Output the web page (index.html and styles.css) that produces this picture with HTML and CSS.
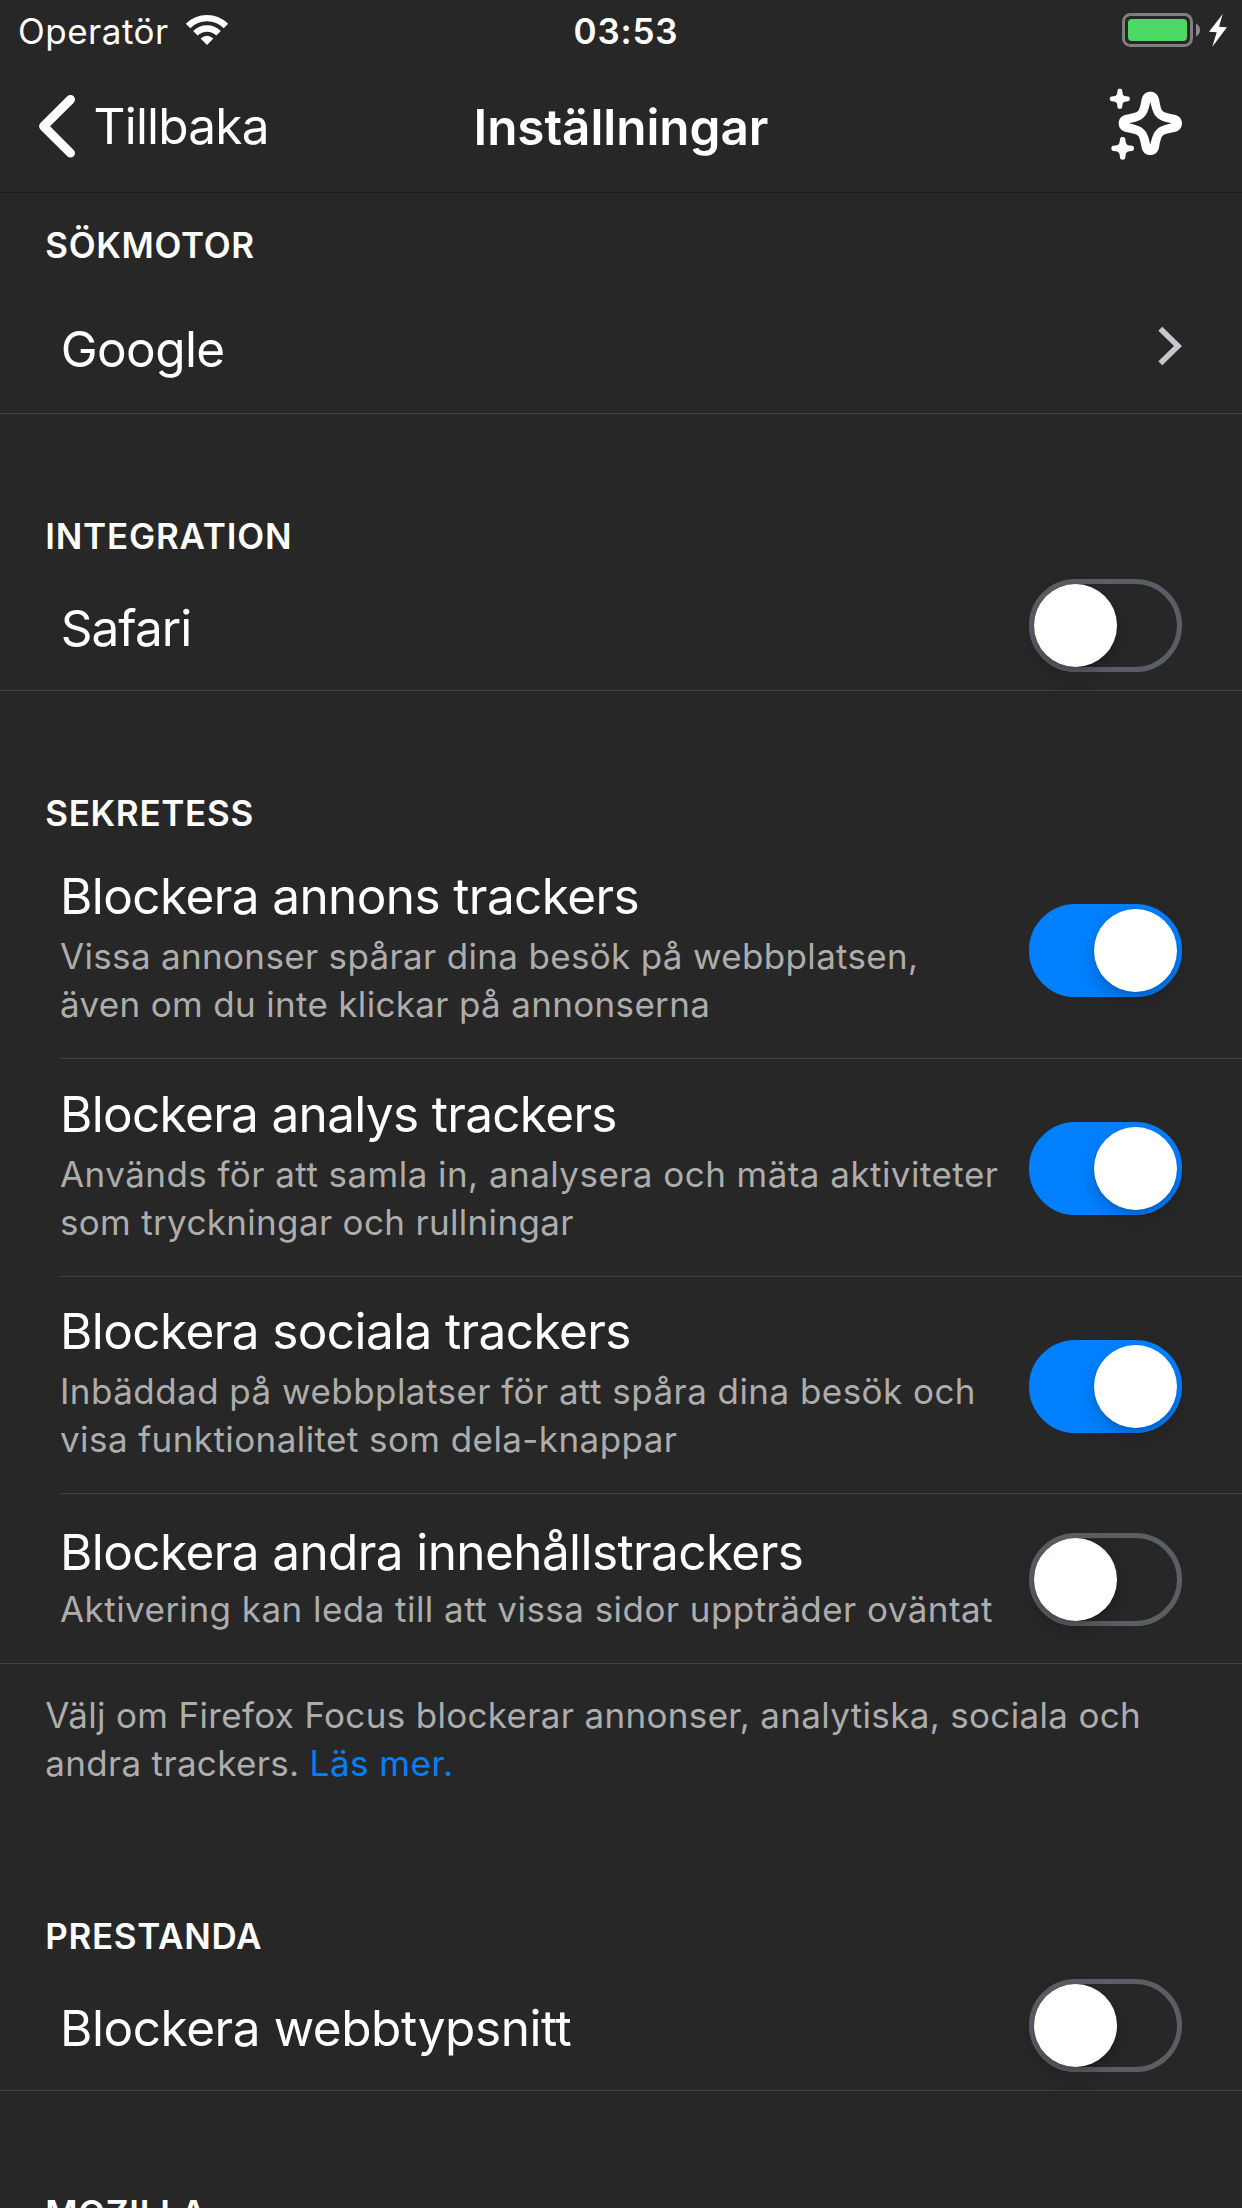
FILE: index.html
```
<!DOCTYPE html>
<html lang="sv">
<head>
<meta charset="utf-8">
<title>Inställningar</title>
<link rel="stylesheet" href="styles.css">
</head>
<body>
<div class="screen">
  <header class="status">
    <div class="status-left">
      <span class="carrier">Operatör</span>
      <svg class="wifi" width="44" height="32" viewBox="0 0 44 32" fill="none" stroke="#fff">
        <path d="M3.05 11.95A26.8 26.8 0 0 1 40.95 11.95" stroke-width="6.3"/>
        <path d="M10.4 19.3A16.4 16.4 0 0 1 33.6 19.3" stroke-width="6.3"/>
        <path d="M22 31L15.6 24.4Q22 19 28.4 24.4Z" fill="#fff" stroke="none"/>
      </svg>
    </div>
    <span class="clock">03:53</span>
    <svg class="battery" width="108" height="36" viewBox="0 0 108 36">
      <rect x="1.5" y="2.5" width="68" height="31" rx="7" fill="none" stroke="#7f7f7f" stroke-width="3"/>
      <rect x="6" y="7" width="59" height="22" rx="4" fill="#4cd964"/>
      <path d="M74 11.7C79.3 13.5 79.3 22.5 74 24.3Z" fill="#8c8c8c"/>
      <path d="M100.7 2L87 19.8L94.7 20.2L90.3 34.7L105 15.2L97 14.8Z" fill="#fff"/>
    </svg>
  </header>

  <nav class="nav">
    <a class="back">
      <svg width="40" height="66" viewBox="0 0 40 66" fill="none" stroke="#fff" stroke-width="9" stroke-linecap="round" stroke-linejoin="round">
        <path d="M34.5 6.5L7.6 33.3L34.5 60.1"/>
      </svg>
      <span class="back-label">Tillbaka</span>
    </a>
    <h1 class="nav-title">Inställningar</h1>
    <svg class="sparkle" width="76" height="76" viewBox="0 0 228 228" fill="#fff">
      <path fill-rule="evenodd" transform="translate(124 118)" d="M0-95C13-95 23-87 26-73C30-50 33-41 37-37C41-33 50-30 73-26C87-23 95-13 95 0C95 13 87 23 73 26C50 30 41 33 37 37C33 41 30 50 26 73C23 87 13 95 0 95C-13 95-23 87-26 73C-30 50-33 41-37 37C-41 33-50 30-73 26C-87 23-95 13-95 0C-95-13-87-23-73-26C-50-30-41-33-37-37C-33-41-30-50-26-73C-23-87-13-95 0-95ZM0-64C-6-38-11-26-19-19C-26-11-38-6-64 0C-38 6-26 11-19 19C-11 26-6 38 0 64C6 38 11 26 19 19C26 11 38 6 64 0C38-6 26-11 19-19C11-26 6-38 0-64Z"/>
      <path transform="translate(32.5 44.5)" d="M0-30C4-30 6-29 7-25C8-15 9-12 11-11C12-9 15-8 25-7C29-6 30-4 30 0C30 4 29 6 25 7C15 8 12 9 11 11C9 12 8 15 7 25C6 29 4 30 0 30C-4 30-6 29-7 25C-8 15-9 12-11 11C-12 9-15 8-25 7C-29 6-30 4-30 0C-30-4-29-6-25-7C-15-8-12-9-11-11C-9-12-8-15-7-25C-6-29-4-30 0-30Z"/>
      <path transform="translate(41 193) scale(1.13)" d="M0-30C4-30 6-29 7-25C8-15 9-12 11-11C12-9 15-8 25-7C29-6 30-4 30 0C30 4 29 6 25 7C15 8 12 9 11 11C9 12 8 15 7 25C6 29 4 30 0 30C-4 30-6 29-7 25C-8 15-9 12-11 11C-12 9-15 8-25 7C-29 6-30 4-30 0C-30-4-29-6-25-7C-15-8-12-9-11-11C-9-12-8-15-7-25C-6-29-4-30 0-30Z"/>
    </svg>
  </nav>

  <main>
    <h2 class="heading heading-first">SÖKMOTOR</h2>
    <div class="row row-link">
      <span class="title title-google">Google</span>
      <svg class="chevron" width="24" height="44" viewBox="0 0 24 44" fill="none" stroke="#c7c7cc" stroke-width="5.6">
        <path d="M2.3 4.7L20 22L2.3 39.3"/>
      </svg>
    </div>

    <h2 class="heading heading-integration">INTEGRATION</h2>
    <div class="row">
      <span class="title title-safari">Safari</span>
      <span class="toggle"></span>
    </div>

    <h2 class="heading heading-privacy">SEKRETESS</h2>
    <div class="row row-detail">
      <div class="copy">
        <span class="title">Blockera annons trackers</span>
        <p class="detail">Vissa annonser spårar dina besök på webbplatsen,<br>även om du inte klickar på annonserna</p>
      </div>
      <span class="toggle toggle-on"></span>
    </div>
    <div class="row row-detail">
      <div class="copy">
        <span class="title title-tight">Blockera analys trackers</span>
        <p class="detail"><span class="wide">Används för att samla in, analysera och mäta aktiviteter</span><br>som tryckningar och rullningar</p>
      </div>
      <span class="toggle toggle-on"></span>
    </div>
    <div class="row row-detail row-detail-last">
      <div class="copy">
        <span class="title">Blockera sociala trackers</span>
        <p class="detail"><span class="wide">Inbäddad på webbplatser för att spåra dina besök och</span><br><span class="medium">visa funktionalitet som dela-knappar</span></p>
      </div>
      <span class="toggle toggle-on"></span>
    </div>
    <div class="row row-short">
      <div class="copy">
        <span class="title">Blockera andra innehållstrackers</span>
        <p class="detail"><span class="wide">Aktivering kan leda till att vissa sidor uppträder oväntat</span></p>
      </div>
      <span class="toggle"></span>
    </div>
    <p class="footnote">Välj om Firefox Focus blockerar annonser, analytiska, sociala och<br>andra trackers. <a class="more">Läs mer.</a></p>

    <h2 class="heading heading-performance">PRESTANDA</h2>
    <div class="row">
      <span class="title title-fonts">Blockera webbtypsnitt</span>
      <span class="toggle"></span>
    </div>

    <h2 class="heading heading-mozilla">MOZILLA</h2>
  </main>
</div>
</body>
</html>
```
FILE: styles.css
```
* { box-sizing: border-box; }

body {
  margin: 0;
  background: #272727;
  color: #fff;
  font-family: Inter, "Liberation Sans", sans-serif;
}

h1, h2, p { margin: 0; }

svg { display: block; flex: none; }

.screen {
  width: 1242px;
  height: 2208px;
  overflow: hidden;
}

/* Status bar */
.status {
  display: grid;
  grid-template-columns: 573.5px 1fr auto;
  height: 60px;
  padding-right: 12px;
  font-size: 35px;
  line-height: 48px;
}

.status-left { display: flex; padding: 7px 0 0 18px; }
.carrier { width: 167px; letter-spacing: 0.5px; }
.wifi { margin-top: 7px; }
.clock { padding-top: 7px; font-weight: 600; letter-spacing: 0.79px; }
.battery { margin-top: 12px; }

/* Navigation bar */
.nav {
  display: grid;
  grid-template-columns: 473.5px 1fr auto;
  height: 133px;
  padding-right: 57px;
  border-bottom: 1px solid #1c1c1c;
  font-size: 49.5px;
  line-height: 60px;
}

.back { display: flex; padding-left: 36px; }
.back svg { margin-top: 33px; }
.back-label { padding: 36px 0 0 17.5px; letter-spacing: -0.78px; }

.nav-title {
  padding-top: 37px;
  font-size: inherit;
  font-weight: 600;
  letter-spacing: -0.07px;
}

.sparkle { margin-top: 24px; }

/* Section headings */
.heading {
  padding-left: 45.2px;
  font-size: 35px;
  font-weight: 600;
  line-height: 48px;
  letter-spacing: 0.7px;
}

.heading-first { height: 89px; padding-top: 28px; }
.heading-integration { height: 145px; padding-top: 98px; letter-spacing: 0.8px; }
.heading-privacy { height: 150px; padding-top: 98px; }
.heading-performance { height: 172px; padding-top: 125px; letter-spacing: 0.68px; }
.heading-mozilla { padding-top: 98px; }

/* Setting rows */
.row {
  display: flex;
  justify-content: space-between;
  height: 132px;
  padding: 20px 60px 0 60px;
  border-bottom: 1px solid #414141;
  white-space: nowrap;
}

.title {
  display: block;
  padding-top: 19px;
  font-size: 49.5px;
  line-height: 60px;
  letter-spacing: -0.6px;
}

.title-tight { letter-spacing: -0.68px; }
.title-google { padding: 17px 0 0 0.7px; letter-spacing: -0.6px; }
.title-safari { padding-left: 0.7px; letter-spacing: -0.95px; }
.title-fonts { letter-spacing: -0.44px; }
.chevron { margin-top: 22px; }

.row-detail { height: 218px; margin-left: 60px; padding: 25px 60px 0 0; }
.row-detail-last { height: 217px; }
.row-detail .toggle { margin-top: 38px; }
.copy .title { padding-top: 0; }

.row-short { height: 170px; padding-top: 28px; }
.row-short .toggle { margin-top: 11px; }

.detail {
  padding-top: 6px;
  color: #adadad;
  font-size: 35px;
  line-height: 48px;
  letter-spacing: 0.33px;
}

.row-detail-last .title { margin-top: -1px; }
.row-short .detail { padding-top: 3px; }
.medium { letter-spacing: 0.42px; }
.wide { letter-spacing: 0.45px; }

.footnote {
  height: 123px;
  padding: 27px 0 0 45.2px;
  color: #adadad;
  font-size: 35px;
  line-height: 48px;
  letter-spacing: 0.33px;
  white-space: nowrap;
}

.more { color: #0080ff; letter-spacing: 0.5px; }

/* Switches */
.toggle {
  display: flex;
  flex: none;
  width: 153px;
  height: 93px;
  border: 5px solid #5a5f66;
  border-radius: 47px;
}

.toggle::before {
  content: "";
  width: 83px;
  height: 83px;
  border-radius: 50%;
  background: #fff;
  box-shadow: 0 8px 20px rgba(0, 0, 0, 0.18), 0 3px 4px rgba(0, 0, 0, 0.1);
}

.toggle-on {
  justify-content: flex-end;
  border-color: #0080ff;
  background: #0080ff;
}
```
